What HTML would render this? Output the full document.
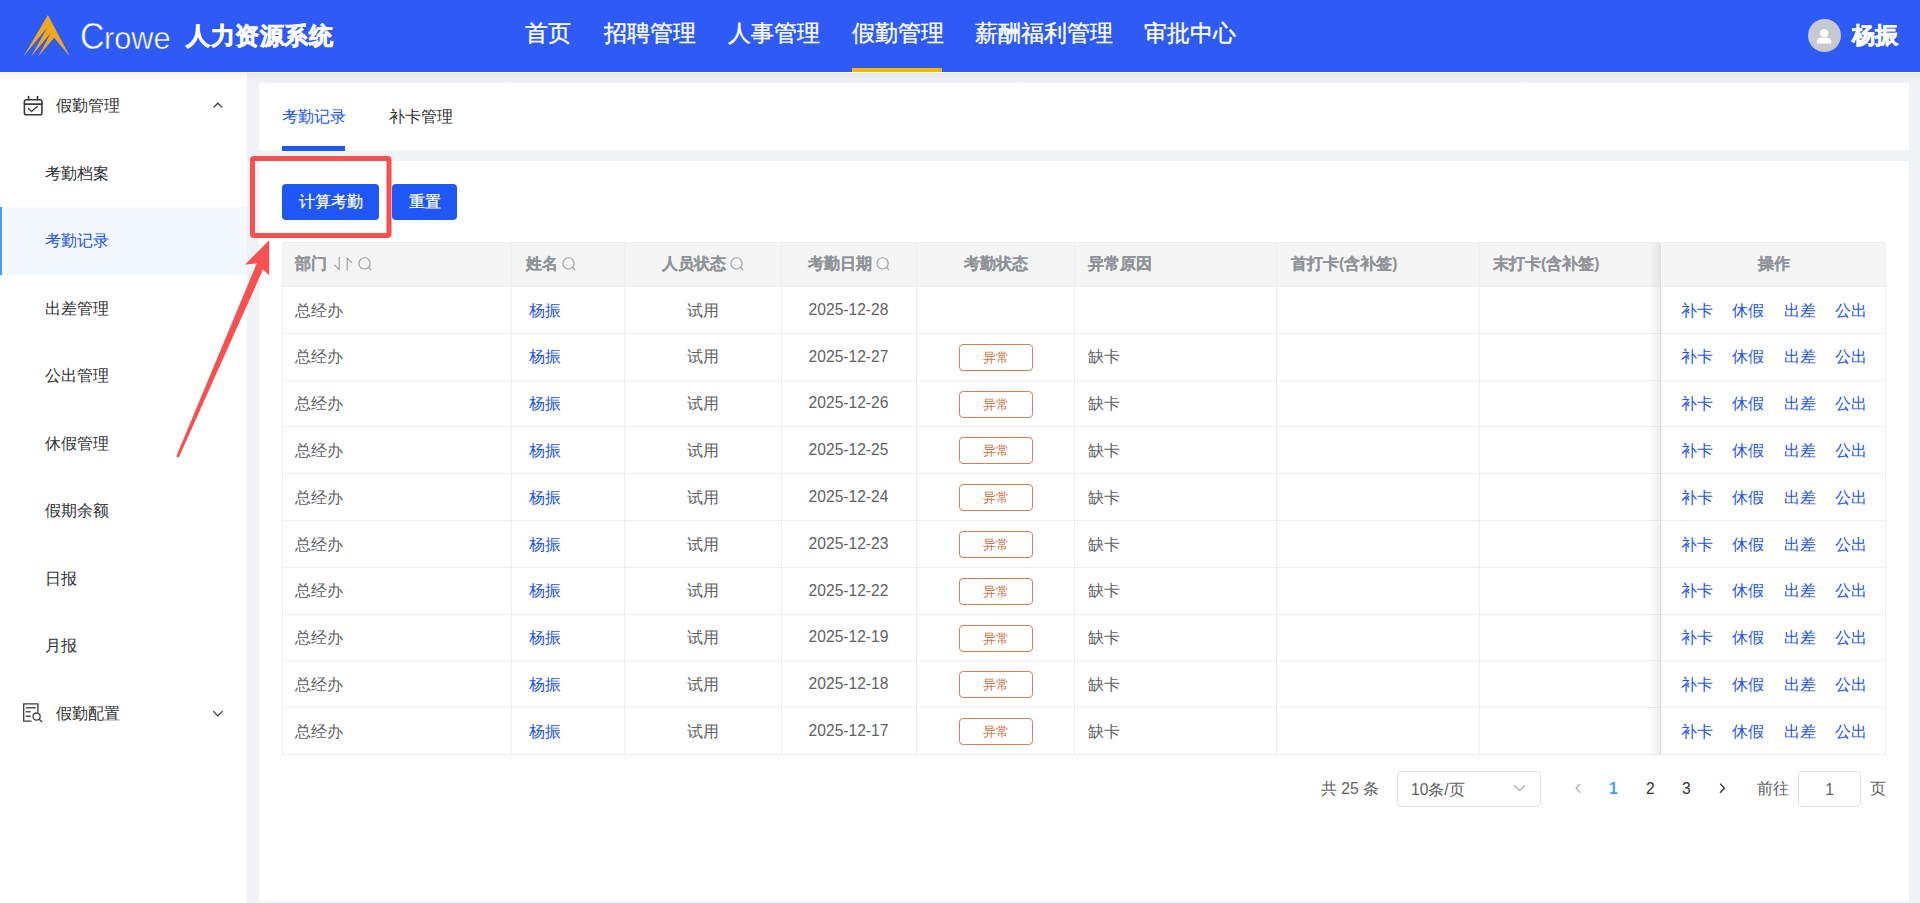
<!DOCTYPE html>
<html><head><meta charset="utf-8"><style>
*{box-sizing:border-box;margin:0;padding:0}
html,body{width:1920px;height:903px;overflow:hidden;background:#f0f2f5;font-family:"Liberation Sans",sans-serif;color:#606266}
div,span{position:absolute;white-space:nowrap}
#hdr{left:0;top:0;width:1920px;height:72px;background:#2e5bf5}
.nav{top:19.3px;font-size:22.6px;line-height:30px;color:#fff;-webkit-text-stroke:0.35px #fff}
#side{left:0;top:72px;width:247px;height:831px;background:#fff}
.si{left:45px;font-size:15.75px;line-height:20px;color:#303133}
#tabs{left:259px;top:83px;width:1650px;height:67px;background:#fff}
#card{left:259px;top:161px;width:1650px;height:740px;background:#fff}
.btn{top:184px;height:36px;background:#1f57f7;border-radius:4px;color:#fff;font-size:15.75px;line-height:36px;text-align:center;-webkit-text-stroke:0.25px #fff}
.hl{left:282px;width:1604px;height:1px;background:#ebeef5}
.vl{width:1px;background:#ebeef5}
.tx{font-size:15.6px;line-height:20px;color:#606266}
.hd{top:254px;font-size:15.6px;line-height:20px;font-weight:bold;color:#909399;-webkit-text-stroke:0.15px #909399}
.lk{color:#1a53fa}
.tag{width:74px;height:27px;border:1px solid #d97e5a;border-radius:4px;color:#d9703f;font-size:13.3px;line-height:25px;text-align:center;background:#fff}
.c{text-align:center}
</style></head><body>
<div id="hdr">
<div class="nav" style="left:525px">首页</div>
<div class="nav" style="left:604px">招聘管理</div>
<div class="nav" style="left:728px">人事管理</div>
<div class="nav" style="left:852px">假勤管理</div>
<div class="nav" style="left:975px">薪酬福利管理</div>
<div class="nav" style="left:1144px">审批中心</div>
<div style="left:852px;top:68px;width:90px;height:4px;background:#f5b800"></div>
<div style="left:79.5px;top:15px;font-size:37px;line-height:44px;color:#fff;transform:scaleX(0.92);transform-origin:0 0;-webkit-text-stroke:0.6px #2e5bf5">C</div>
<div style="left:104px;top:18px;font-size:32px;line-height:40px;color:#fff;transform:scaleX(0.96);transform-origin:0 0;-webkit-text-stroke:0.5px #2e5bf5">rowe</div>
<div style="left:186px;top:20px;font-size:24px;line-height:32px;color:#fff;font-weight:bold;letter-spacing:0.5px;-webkit-text-stroke:0.7px #fff">人力资源系统</div>
<div style="left:1808px;top:19px;width:33px;height:33px;border-radius:50%;background:#c6c9d0"></div>
<div style="left:1852px;top:19px;font-size:23px;line-height:32px;color:#fff;font-weight:bold;-webkit-text-stroke:0.6px #fff">杨振</div>
</div>
<div id="side"></div>
<div style="left:3px;top:207px;width:244px;height:68px;background:#f3f8ff"></div>
<div style="left:0;top:207px;width:2px;height:68px;background:#409eff"></div>
<div class="si" style="left:56px;top:96px">假勤管理</div>
<div class="si" style="top:164px;color:#303133">考勤档案</div>
<div class="si" style="top:231px;color:#1a53fa">考勤记录</div>
<div class="si" style="top:299px;color:#303133">出差管理</div>
<div class="si" style="top:366px;color:#303133">公出管理</div>
<div class="si" style="top:434px;color:#303133">休假管理</div>
<div class="si" style="top:501px;color:#303133">假期余额</div>
<div class="si" style="top:569px;color:#303133">日报</div>
<div class="si" style="top:636px;color:#303133">月报</div>
<div class="si" style="left:56px;top:704px">假勤配置</div>
<div style="left:0;top:72px;width:1920px;height:1px;background:#fbfbfa"></div>
<div style="left:0;top:73px;width:247px;height:8px;background:linear-gradient(rgba(0,0,0,0.05),rgba(0,0,0,0))"></div>
<div style="left:247px;top:73px;width:1673px;height:9px;background:linear-gradient(rgba(0,0,0,0.05),rgba(0,0,0,0))"></div>
<div id="tabs"></div>
<div class="tx" style="left:282px;top:107px;font-size:15.75px;color:#1a53fa">考勤记录</div>
<div class="tx" style="left:389px;top:107px;font-size:15.75px;color:#303133">补卡管理</div>
<div style="left:282px;top:146px;width:63px;height:5px;background:#1f57f7"></div>
<div id="card"></div>
<div class="btn" style="left:282px;width:97px">计算考勤</div>
<div class="btn" style="left:392px;width:65px">重置</div>
<div style="left:282px;top:242px;width:1604px;height:44px;background:#f5f5f5"></div>
<div class="hl" style="top:242px"></div>
<div class="hl" style="top:286.0px"></div>
<div class="hl" style="top:332.8px"></div>
<div class="hl" style="top:379.6px"></div>
<div class="hl" style="top:426.4px"></div>
<div class="hl" style="top:473.2px"></div>
<div class="hl" style="top:520.0px"></div>
<div class="hl" style="top:566.8px"></div>
<div class="hl" style="top:613.6px"></div>
<div class="hl" style="top:660.4px"></div>
<div class="hl" style="top:707.2px"></div>
<div class="hl" style="top:754.0px"></div>
<div class="vl" style="left:282.0px;top:242px;height:513px"></div>
<div class="vl" style="left:511.0px;top:242px;height:513px"></div>
<div class="vl" style="left:624.2px;top:242px;height:513px"></div>
<div class="vl" style="left:780.9px;top:242px;height:513px"></div>
<div class="vl" style="left:916.1px;top:242px;height:513px"></div>
<div class="vl" style="left:1074.2px;top:242px;height:513px"></div>
<div class="vl" style="left:1276.1px;top:242px;height:513px"></div>
<div class="vl" style="left:1479.2px;top:242px;height:513px"></div>
<div class="vl" style="left:1660.1px;top:242px;height:513px"></div>
<div class="vl" style="left:1885.0px;top:242px;height:513px"></div>
<div style="left:1649px;top:243px;width:12px;height:512px;background:linear-gradient(to right,rgba(0,0,0,0),rgba(0,0,0,0.07))"></div>
<div style="left:1661px;top:243px;width:1px;height:512px;background:rgba(255,255,255,0.6)"></div>
<div class="hd" style="left:295px">部门</div>
<div class="hd" style="left:526px">姓名</div>
<div class="hd" style="left:662px">人员状态</div>
<div class="hd" style="left:808px">考勤日期</div>
<div class="hd c" style="left:917px;width:158px">考勤状态</div>
<div class="hd" style="left:1088px">异常原因</div>
<div class="hd" style="left:1291px">首打卡(含补签)</div>
<div class="hd" style="left:1493px">末打卡(含补签)</div>
<div class="hd c" style="left:1661px;width:225px">操作</div>
<div class="tx" style="left:295px;top:300.6px">总经办</div>
<div class="tx lk" style="left:529px;top:300.6px">杨振</div>
<div class="tx c" style="left:624px;width:157px;top:300.6px">试用</div>
<div class="tx c" style="left:781px;width:135px;top:299.8px">2025-12-28</div>
<div class="tx lk" style="left:1680.5px;top:300.6px">补卡</div>
<div class="tx lk" style="left:1732.0px;top:300.6px">休假</div>
<div class="tx lk" style="left:1783.5px;top:300.6px">出差</div>
<div class="tx lk" style="left:1835.0px;top:300.6px">公出</div>
<div class="tx" style="left:295px;top:347.4px">总经办</div>
<div class="tx lk" style="left:529px;top:347.4px">杨振</div>
<div class="tx c" style="left:624px;width:157px;top:347.4px">试用</div>
<div class="tx c" style="left:781px;width:135px;top:346.6px">2025-12-27</div>
<div class="tag" style="left:959px;top:343.8px">异常</div>
<div class="tx" style="left:1088px;top:347.4px">缺卡</div>
<div class="tx lk" style="left:1680.5px;top:347.4px">补卡</div>
<div class="tx lk" style="left:1732.0px;top:347.4px">休假</div>
<div class="tx lk" style="left:1783.5px;top:347.4px">出差</div>
<div class="tx lk" style="left:1835.0px;top:347.4px">公出</div>
<div class="tx" style="left:295px;top:394.2px">总经办</div>
<div class="tx lk" style="left:529px;top:394.2px">杨振</div>
<div class="tx c" style="left:624px;width:157px;top:394.2px">试用</div>
<div class="tx c" style="left:781px;width:135px;top:393.4px">2025-12-26</div>
<div class="tag" style="left:959px;top:390.6px">异常</div>
<div class="tx" style="left:1088px;top:394.2px">缺卡</div>
<div class="tx lk" style="left:1680.5px;top:394.2px">补卡</div>
<div class="tx lk" style="left:1732.0px;top:394.2px">休假</div>
<div class="tx lk" style="left:1783.5px;top:394.2px">出差</div>
<div class="tx lk" style="left:1835.0px;top:394.2px">公出</div>
<div class="tx" style="left:295px;top:441.0px">总经办</div>
<div class="tx lk" style="left:529px;top:441.0px">杨振</div>
<div class="tx c" style="left:624px;width:157px;top:441.0px">试用</div>
<div class="tx c" style="left:781px;width:135px;top:440.2px">2025-12-25</div>
<div class="tag" style="left:959px;top:437.4px">异常</div>
<div class="tx" style="left:1088px;top:441.0px">缺卡</div>
<div class="tx lk" style="left:1680.5px;top:441.0px">补卡</div>
<div class="tx lk" style="left:1732.0px;top:441.0px">休假</div>
<div class="tx lk" style="left:1783.5px;top:441.0px">出差</div>
<div class="tx lk" style="left:1835.0px;top:441.0px">公出</div>
<div class="tx" style="left:295px;top:487.8px">总经办</div>
<div class="tx lk" style="left:529px;top:487.8px">杨振</div>
<div class="tx c" style="left:624px;width:157px;top:487.8px">试用</div>
<div class="tx c" style="left:781px;width:135px;top:487.0px">2025-12-24</div>
<div class="tag" style="left:959px;top:484.2px">异常</div>
<div class="tx" style="left:1088px;top:487.8px">缺卡</div>
<div class="tx lk" style="left:1680.5px;top:487.8px">补卡</div>
<div class="tx lk" style="left:1732.0px;top:487.8px">休假</div>
<div class="tx lk" style="left:1783.5px;top:487.8px">出差</div>
<div class="tx lk" style="left:1835.0px;top:487.8px">公出</div>
<div class="tx" style="left:295px;top:534.6px">总经办</div>
<div class="tx lk" style="left:529px;top:534.6px">杨振</div>
<div class="tx c" style="left:624px;width:157px;top:534.6px">试用</div>
<div class="tx c" style="left:781px;width:135px;top:533.8px">2025-12-23</div>
<div class="tag" style="left:959px;top:531.0px">异常</div>
<div class="tx" style="left:1088px;top:534.6px">缺卡</div>
<div class="tx lk" style="left:1680.5px;top:534.6px">补卡</div>
<div class="tx lk" style="left:1732.0px;top:534.6px">休假</div>
<div class="tx lk" style="left:1783.5px;top:534.6px">出差</div>
<div class="tx lk" style="left:1835.0px;top:534.6px">公出</div>
<div class="tx" style="left:295px;top:581.4px">总经办</div>
<div class="tx lk" style="left:529px;top:581.4px">杨振</div>
<div class="tx c" style="left:624px;width:157px;top:581.4px">试用</div>
<div class="tx c" style="left:781px;width:135px;top:580.6px">2025-12-22</div>
<div class="tag" style="left:959px;top:577.8px">异常</div>
<div class="tx" style="left:1088px;top:581.4px">缺卡</div>
<div class="tx lk" style="left:1680.5px;top:581.4px">补卡</div>
<div class="tx lk" style="left:1732.0px;top:581.4px">休假</div>
<div class="tx lk" style="left:1783.5px;top:581.4px">出差</div>
<div class="tx lk" style="left:1835.0px;top:581.4px">公出</div>
<div class="tx" style="left:295px;top:628.2px">总经办</div>
<div class="tx lk" style="left:529px;top:628.2px">杨振</div>
<div class="tx c" style="left:624px;width:157px;top:628.2px">试用</div>
<div class="tx c" style="left:781px;width:135px;top:627.4px">2025-12-19</div>
<div class="tag" style="left:959px;top:624.6px">异常</div>
<div class="tx" style="left:1088px;top:628.2px">缺卡</div>
<div class="tx lk" style="left:1680.5px;top:628.2px">补卡</div>
<div class="tx lk" style="left:1732.0px;top:628.2px">休假</div>
<div class="tx lk" style="left:1783.5px;top:628.2px">出差</div>
<div class="tx lk" style="left:1835.0px;top:628.2px">公出</div>
<div class="tx" style="left:295px;top:675.0px">总经办</div>
<div class="tx lk" style="left:529px;top:675.0px">杨振</div>
<div class="tx c" style="left:624px;width:157px;top:675.0px">试用</div>
<div class="tx c" style="left:781px;width:135px;top:674.2px">2025-12-18</div>
<div class="tag" style="left:959px;top:671.4px">异常</div>
<div class="tx" style="left:1088px;top:675.0px">缺卡</div>
<div class="tx lk" style="left:1680.5px;top:675.0px">补卡</div>
<div class="tx lk" style="left:1732.0px;top:675.0px">休假</div>
<div class="tx lk" style="left:1783.5px;top:675.0px">出差</div>
<div class="tx lk" style="left:1835.0px;top:675.0px">公出</div>
<div class="tx" style="left:295px;top:721.8px">总经办</div>
<div class="tx lk" style="left:529px;top:721.8px">杨振</div>
<div class="tx c" style="left:624px;width:157px;top:721.8px">试用</div>
<div class="tx c" style="left:781px;width:135px;top:721.0px">2025-12-17</div>
<div class="tag" style="left:959px;top:718.2px">异常</div>
<div class="tx" style="left:1088px;top:721.8px">缺卡</div>
<div class="tx lk" style="left:1680.5px;top:721.8px">补卡</div>
<div class="tx lk" style="left:1732.0px;top:721.8px">休假</div>
<div class="tx lk" style="left:1783.5px;top:721.8px">出差</div>
<div class="tx lk" style="left:1835.0px;top:721.8px">公出</div>
<div class="tx" style="left:1321px;top:779px">共 25 条</div>
<div style="left:1397px;top:771px;width:144px;height:36px;border:1px solid #dcdfe6;border-radius:4px;background:#fff"></div>
<div class="tx" style="left:1411px;top:780px">10条/页</div>
<div class="tx" style="left:1609px;top:779px;color:#409eff;font-weight:bold">1</div>
<div class="tx" style="left:1646px;top:779px;color:#303133">2</div>
<div class="tx" style="left:1682px;top:779px;color:#303133">3</div>
<div class="tx" style="left:1757px;top:779px">前往</div>
<div style="left:1798px;top:771px;width:63px;height:36px;border:1px solid #dcdfe6;border-radius:4px;background:#fff"></div>
<div class="tx c" style="left:1798px;width:63px;top:780px">1</div>
<div class="tx" style="left:1870px;top:779px">页</div>
<svg width="1920" height="903" style="position:absolute;left:0;top:0"><polygon fill="#f2a81d" points="47.9,15.1 69.9,56.4 54.1,37.8 38.2,56.4 50.9,32.8 31.1,56.4 47.3,27.5 23.4,56.4"/><circle cx="1824.2" cy="33.3" r="4.2" fill="#fff"/><path d="M1816.9,43.4 L1831.1,43.4 L1831.1,41.5 Q1831.1,37.8 1827,37.8 L1821,37.8 Q1816.9,37.8 1816.9,41.5 Z" fill="#fff"/><g fill="none" stroke="#3a3a3a" stroke-width="1.6" stroke-linecap="round" stroke-linejoin="round"><rect x="24.4" y="99.8" width="17.5" height="14.9" rx="1.8"/><line x1="24.4" y1="104.1" x2="41.9" y2="104.1"/><line x1="28.6" y1="96.6" x2="28.6" y2="99.8"/><line x1="37.5" y1="96.6" x2="37.5" y2="99.8"/><polyline points="28.2,108.3 31.5,111.6 37.4,106.5" stroke-width="1.3"/></g><polyline points="213.5,107.4 217.8,103.2 222.3,107.4" fill="none" stroke="#333" stroke-width="1.2"/><g fill="none" stroke="#3a3a3a" stroke-width="1.3"><path d="M31.5,721.2 L23.7,721.2 L23.7,703.8 L37.9,703.8 L37.9,712.5"/><line x1="25.8" y1="707.8" x2="35.8" y2="707.8"/><line x1="25.8" y1="711.8" x2="30.8" y2="711.8"/><line x1="25.8" y1="716.2" x2="30.8" y2="716.2"/><circle cx="36.6" cy="716.6" r="3.6"/><line x1="39.2" y1="719.2" x2="42" y2="722"/></g><polyline points="213.3,711.2 217.8,715.9 222.5,711.2" fill="none" stroke="#333" stroke-width="1.2"/><g fill="none" stroke="#9a9ca3" stroke-width="1.1"><polyline points="334.3,264.6 339.2,269.7 339.2,257"/><polyline points="347.2,270.8 347.2,258.1 352.1,262.8"/></g><g fill="none" stroke="#9a9ca3" stroke-width="1.1"><circle cx="364.5" cy="263.4" r="5.6"/><line x1="368.6" y1="267.5" x2="371.2" y2="270.1"/></g><g fill="none" stroke="#9a9ca3" stroke-width="1.1"><circle cx="568.5" cy="263.4" r="5.6"/><line x1="572.6" y1="267.5" x2="575.2" y2="270.1"/></g><g fill="none" stroke="#9a9ca3" stroke-width="1.1"><circle cx="736.5" cy="263.4" r="5.6"/><line x1="740.6" y1="267.5" x2="743.2" y2="270.1"/></g><g fill="none" stroke="#9a9ca3" stroke-width="1.1"><circle cx="882.6" cy="263.4" r="5.6"/><line x1="886.7" y1="267.5" x2="889.3000000000001" y2="270.1"/></g><polyline points="1580,784 1576,788.3 1580,792.6" fill="none" stroke="#a8abb2" stroke-width="1.2"/><polyline points="1720,783.6 1724.4,788.2 1720,792.8" fill="none" stroke="#303133" stroke-width="1.3"/><polyline points="1514,785.5 1519.5,790.5 1525,785.5" fill="none" stroke="#a8abb2" stroke-width="1.2"/><rect x="252.5" y="158.5" width="136.5" height="77" rx="1.5" fill="none" stroke="#f65050" stroke-width="5"/><polygon fill="#f65050" points="269.2,240.3 269.2,275.2 263,269.5 178.8,457.6 176.2,456.6 256.8,263.3 245,264.6"/></svg>
</body></html>
